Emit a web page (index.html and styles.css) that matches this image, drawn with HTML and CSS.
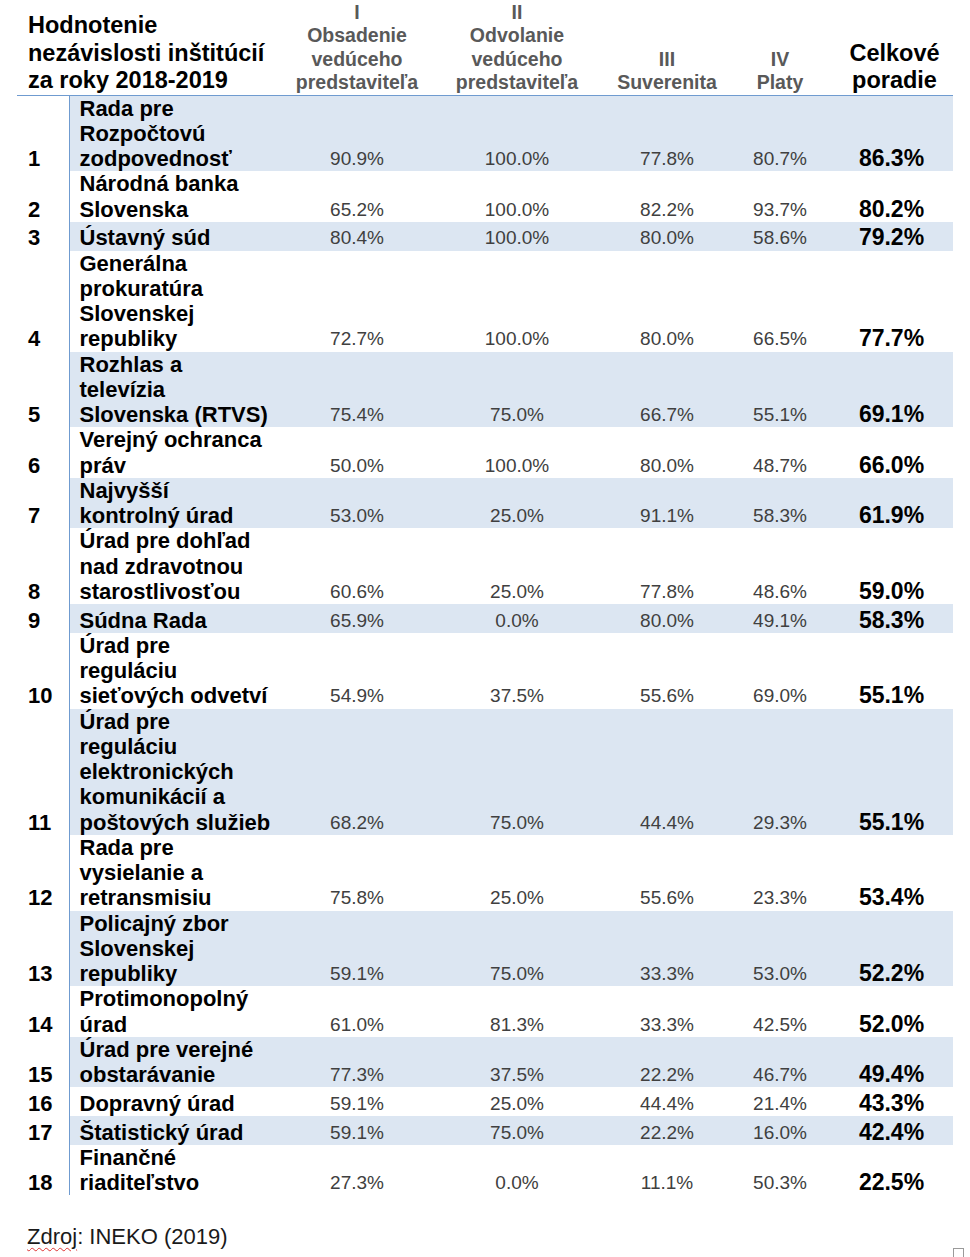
FILE: index.html
```html
<!DOCTYPE html>
<html lang="sk">
<head>
<meta charset="utf-8">
<title>Hodnotenie nezávislosti inštitúcií</title>
<link rel="stylesheet" href="styles.css">
</head>
<body>
<div class="page">
  <table class="rank-table">
    <colgroup>
      <col class="c-rank"><col class="c-name"><col class="c-1"><col class="c-2"><col class="c-3"><col class="c-4"><col class="c-total">
    </colgroup>
    <thead>
      <tr>
        <th class="title" colspan="2">Hodnotenie<br>nezávislosti inštitúcií<br>za roky 2018-2019</th>
        <th class="crit">I<br>Obsadenie<br>vedúceho<br>predstaviteľa</th>
        <th class="crit">II<br>Odvolanie<br>vedúceho<br>predstaviteľa</th>
        <th class="crit">III<br>Suverenita</th>
        <th class="crit">IV<br>Platy</th>
        <th class="overall">Celkové<br>poradie</th>
      </tr>
    </thead>
    <tbody>
      <tr class="band"><td class="rank">1</td><td class="name">Rada pre<br>Rozpočtovú<br>zodpovednosť</td><td class="val">90.9%</td><td class="val">100.0%</td><td class="val">77.8%</td><td class="val">80.7%</td><td class="tot">86.3%</td></tr>
      <tr><td class="rank">2</td><td class="name">Národná banka<br>Slovenska</td><td class="val">65.2%</td><td class="val">100.0%</td><td class="val">82.2%</td><td class="val">93.7%</td><td class="tot">80.2%</td></tr>
      <tr class="band"><td class="rank">3</td><td class="name">Ústavný súd</td><td class="val">80.4%</td><td class="val">100.0%</td><td class="val">80.0%</td><td class="val">58.6%</td><td class="tot">79.2%</td></tr>
      <tr><td class="rank">4</td><td class="name">Generálna<br>prokuratúra<br>Slovenskej<br>republiky</td><td class="val">72.7%</td><td class="val">100.0%</td><td class="val">80.0%</td><td class="val">66.5%</td><td class="tot">77.7%</td></tr>
      <tr class="band"><td class="rank">5</td><td class="name">Rozhlas a<br>televízia<br>Slovenska (RTVS)</td><td class="val">75.4%</td><td class="val">75.0%</td><td class="val">66.7%</td><td class="val">55.1%</td><td class="tot">69.1%</td></tr>
      <tr><td class="rank">6</td><td class="name">Verejný ochranca<br>práv</td><td class="val">50.0%</td><td class="val">100.0%</td><td class="val">80.0%</td><td class="val">48.7%</td><td class="tot">66.0%</td></tr>
      <tr class="band"><td class="rank">7</td><td class="name">Najvyšší<br>kontrolný úrad</td><td class="val">53.0%</td><td class="val">25.0%</td><td class="val">91.1%</td><td class="val">58.3%</td><td class="tot">61.9%</td></tr>
      <tr><td class="rank">8</td><td class="name">Úrad pre dohľad<br>nad zdravotnou<br>starostlivosťou</td><td class="val">60.6%</td><td class="val">25.0%</td><td class="val">77.8%</td><td class="val">48.6%</td><td class="tot">59.0%</td></tr>
      <tr class="band"><td class="rank">9</td><td class="name">Súdna Rada</td><td class="val">65.9%</td><td class="val">0.0%</td><td class="val">80.0%</td><td class="val">49.1%</td><td class="tot">58.3%</td></tr>
      <tr><td class="rank">10</td><td class="name">Úrad pre<br>reguláciu<br>sieťových odvetví</td><td class="val">54.9%</td><td class="val">37.5%</td><td class="val">55.6%</td><td class="val">69.0%</td><td class="tot">55.1%</td></tr>
      <tr class="band"><td class="rank">11</td><td class="name">Úrad pre<br>reguláciu<br>elektronických<br>komunikácií a<br>poštových služieb</td><td class="val">68.2%</td><td class="val">75.0%</td><td class="val">44.4%</td><td class="val">29.3%</td><td class="tot">55.1%</td></tr>
      <tr><td class="rank">12</td><td class="name">Rada pre<br>vysielanie a<br>retransmisiu</td><td class="val">75.8%</td><td class="val">25.0%</td><td class="val">55.6%</td><td class="val">23.3%</td><td class="tot">53.4%</td></tr>
      <tr class="band"><td class="rank">13</td><td class="name">Policajný zbor<br>Slovenskej<br>republiky</td><td class="val">59.1%</td><td class="val">75.0%</td><td class="val">33.3%</td><td class="val">53.0%</td><td class="tot">52.2%</td></tr>
      <tr><td class="rank">14</td><td class="name">Protimonopolný<br>úrad</td><td class="val">61.0%</td><td class="val">81.3%</td><td class="val">33.3%</td><td class="val">42.5%</td><td class="tot">52.0%</td></tr>
      <tr class="band"><td class="rank">15</td><td class="name">Úrad pre verejné<br>obstarávanie</td><td class="val">77.3%</td><td class="val">37.5%</td><td class="val">22.2%</td><td class="val">46.7%</td><td class="tot">49.4%</td></tr>
      <tr><td class="rank">16</td><td class="name">Dopravný úrad</td><td class="val">59.1%</td><td class="val">25.0%</td><td class="val">44.4%</td><td class="val">21.4%</td><td class="tot">43.3%</td></tr>
      <tr class="band"><td class="rank">17</td><td class="name">Štatistický úrad</td><td class="val">59.1%</td><td class="val">75.0%</td><td class="val">22.2%</td><td class="val">16.0%</td><td class="tot">42.4%</td></tr>
      <tr><td class="rank">18</td><td class="name">Finančné<br>riaditeľstvo</td><td class="val">27.3%</td><td class="val">0.0%</td><td class="val">11.1%</td><td class="val">50.3%</td><td class="tot">22.5%</td></tr>
    </tbody>
  </table>
  <p class="source"><span class="misspelled">Zdroj</span>: INEKO (2019)</p>
  <div class="handle"></div>
</div>
</body>
</html>
```

FILE: styles.css
```css
html, body {
  margin: 0;
  padding: 0;
  background: #ffffff;
}

.page {
  position: relative;
  width: 970px;
  height: 1257px;
  padding-left: 17px;
  box-sizing: border-box;
  font-family: "Liberation Sans", Arial, sans-serif;
  color: #000;
  overflow: hidden;
}

.rank-table {
  border-collapse: collapse;
  table-layout: fixed;
  width: 936px;
}

.c-rank { width: 52px; }
.c-name { width: 221px; }
.c-1 { width: 134px; }
.c-2 { width: 186px; }
.c-3 { width: 114px; }
.c-4 { width: 112px; }
.c-total { width: 117px; }

.rank-table th,
.rank-table td {
  padding: 0;
  vertical-align: bottom;
  white-space: nowrap;
}

.rank-table thead tr {
  height: 95px;
  border-bottom: 1.5px solid #6f9bd0;
}

.title {
  text-align: left;
  padding-left: 11px !important;
  font-size: 23.5px;
  line-height: 27.5px;
  font-weight: bold;
}

.crit {
  text-align: center;
  font-size: 19.5px;
  line-height: 23.5px;
  font-weight: bold;
  color: #595959;
}

.overall {
  text-align: center;
  font-size: 23.5px;
  line-height: 27.5px;
  font-weight: bold;
  color: #000;
}

.rank-table tbody tr {
  height: 28.75px;
}

.rank-table tbody td {
  line-height: 25.25px;
}

.rank {
  font-size: 22px;
  font-weight: bold;
  padding-left: 11px !important;
}

.name {
  border-left: 1.5px solid #6f9bd0;
  padding-left: 10px !important;
  font-size: 22px;
  font-weight: bold;
}

.val {
  text-align: center;
  font-size: 19px;
  color: #404040;
}

.tot {
  text-align: center;
  font-size: 23px;
  font-weight: bold;
  padding-right: 6px !important;
}

.band .name,
.band .val,
.band .tot {
  background: #dce6f2;
}

.source {
  margin: 29px 0 0 10px;
  font-size: 22px;
  line-height: 26px;
  color: #1a1a1a;
}

.misspelled {
  text-decoration: underline wavy #d33;
  text-decoration-thickness: 1px;
  text-underline-offset: 3px;
}

.handle {
  position: absolute;
  right: 6px;
  bottom: 0;
  width: 9px;
  height: 8px;
  border: 1px solid #9a9a9a;
  border-bottom: none;
}
```
